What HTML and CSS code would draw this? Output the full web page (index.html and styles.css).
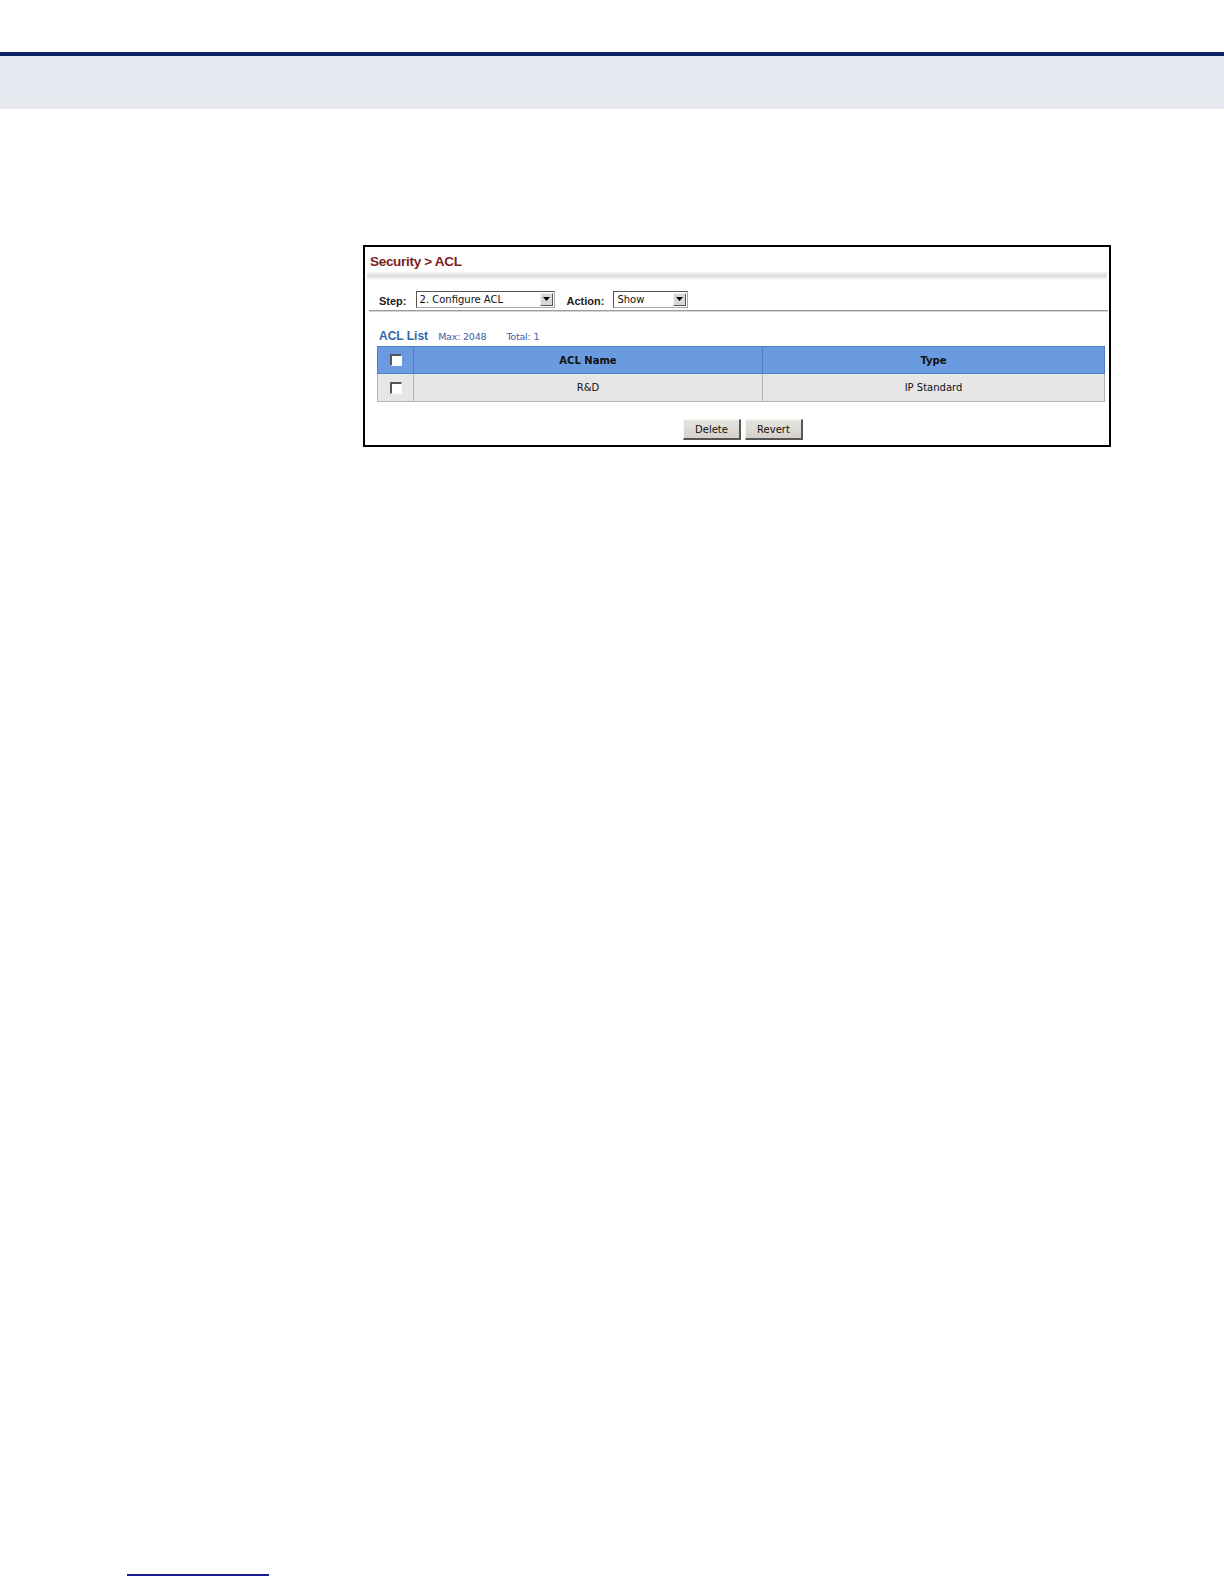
FILE: index.html
```html
<!DOCTYPE html>
<html>
<head>
<meta charset="utf-8">
<link rel="stylesheet" href="styles.css">
</head>
<body>
<div class="topbar"></div>
<div class="panel">
  <div class="title">Security &gt; ACL</div>
  <div class="title-band"></div>
  <div class="step-row">
    <span class="lbl">Step:</span>
    <div class="select sel-step"><span class="sel-text">2. Configure ACL</span><span class="arrow"><svg width="7" height="4" viewBox="0 0 7 4"><path d="M0 0H7L3.5 4Z" fill="#000"/></svg></span></div>
    <span class="lbl lbl-action">Action:</span>
    <div class="select sel-action"><span class="sel-text">Show</span><span class="arrow"><svg width="7" height="4" viewBox="0 0 7 4"><path d="M0 0H7L3.5 4Z" fill="#000"/></svg></span></div>
  </div>
  <div class="sep"></div>
  <div class="list-head">
    <span class="list-title">ACL List</span>
    <span class="list-meta">Max: 2048</span>
    <span class="list-meta total">Total: 1</span>
  </div>
  <table class="grid">
    <tr class="hdr">
      <td class="cb-cell"><span class="cb"></span></td>
      <td class="name-col">ACL Name</td>
      <td>Type</td>
    </tr>
    <tr class="row">
      <td class="cb-cell"><span class="cb"></span></td>
      <td class="name-col">R&amp;D</td>
      <td>IP Standard</td>
    </tr>
  </table>
  <div class="buttons">
    <span class="btn">Delete</span>
    <span class="btn">Revert</span>
  </div>
</div>
<div class="footline"></div>
</body>
</html>
```

FILE: styles.css
```css
html, body {
  margin: 0;
  padding: 0;
  background: #ffffff;
}
body {
  width: 1224px;
  height: 1584px;
  font-family: "DejaVu Sans", "Liberation Sans", sans-serif;
  position: relative;
}
.topbar {
  margin-top: 52px;
  height: 53px;
  border-top: 4px solid #0c2462;
  background: linear-gradient(#e4e8f0, #e6e9ee);
}
.panel {
  margin-top: 136px;
  margin-left: 363px;
  width: 744px;
  height: 198px;
  border: 2px solid #000;
  box-sizing: content-box;
}
.title {
  height: 25px;
  padding-left: 5px;
  padding-top: 7px;
  box-sizing: border-box;
  font-family: "Liberation Sans", Arial, sans-serif;
  font-weight: bold;
  font-size: 13.5px;
  color: #7a1e20;
  letter-spacing: -0.3px;
}
.title-band {
  height: 8px;
  margin: 0 2px;
  background: linear-gradient(#f4f4f4, #dcdcdc 45%, #efefef 80%, #fafafa);
}
.step-row {
  display: flex;
  align-items: center;
  height: 20px;
  margin-top: 9px;
  padding-left: 14px;
  font-family: "Liberation Sans", Arial, sans-serif;
}
.lbl {
  font-size: 11px;
  font-weight: bold;
  color: #222;
  margin-top: 3px;
}
.lbl-action {
  margin-left: 12px;
}
.select {
  display: flex;
  align-items: center;
  justify-content: space-between;
  height: 17px;
  box-sizing: border-box;
  border: 1px solid #555;
  border-right-color: #aaa;
  border-bottom-color: #aaa;
  background: #fff;
  margin-left: 9px;
  padding-left: 3px;
  padding-right: 1px;
}
.sel-step { width: 139px; }
.sel-action { width: 75px; margin-left: 9px; }
.sel-text {
  font-family: "DejaVu Sans", sans-serif;
  font-size: 10px;
  color: #111;
}
.arrow {
  width: 13px;
  height: 13px;
  box-sizing: border-box;
  background: #d8d8d8;
  border: 1px solid #f4f4f4;
  border-right-color: #555;
  border-bottom-color: #555;
  display: flex;
  align-items: center;
  justify-content: center;
}
.sep {
  margin: 1px 1px 0 4px;
  height: 1px;
  background: #9a9a9a;
  border-bottom: 1px solid #d4d4d4;
}
.list-head {
  margin-top: 17px;
  padding-left: 14px;
  display: flex;
  align-items: baseline;
  height: 14px;
  font-family: "Liberation Sans", Arial, sans-serif;
  color: #2f5aa6;
}
.list-title {
  font-size: 12px;
  font-weight: bold;
  color: #3466ac;
}
.list-meta {
  font-family: "DejaVu Sans", sans-serif;
  font-size: 9.5px;
  margin-left: 10px;
  color: #3a62a8;
  letter-spacing: -0.2px;
}
.list-meta.total { margin-left: 20px; }
.grid {
  margin-top: 3px;
  margin-left: 12px;
  width: 728px;
  border-collapse: collapse;
  font-family: "DejaVu Sans", sans-serif;
  font-size: 10px;
  text-align: center;
}
.grid td {
  padding: 0;
}
.hdr td {
  height: 26px;
  background: #6a9be0;
  border: 1px solid #4f80c4;
  color: #111;
  font-weight: bold;
}
.row td {
  height: 27px;
  background: #e6e6e6;
  border: 1px solid #b4b4b4;
  color: #111;
}
.cb-cell { width: 35px; }
.name-col { width: 348px; }
.cb {
  display: inline-block;
  width: 12px;
  height: 12px;
  box-sizing: border-box;
  background: #fff;
  border: 1px solid #f8f8f8;
  border-top: 2px solid #555;
  border-left: 2px solid #555;
  vertical-align: middle;
}
.buttons {
  display: flex;
  justify-content: center;
  gap: 4px;
  margin-top: 17px;
  padding-left: 12px;
}
.btn {
  width: 58px;
  height: 21px;
  box-sizing: border-box;
  background: linear-gradient(#e6e4df, #d4d1ca);
  border: 1px solid #f5f5f5;
  border-right: 2px solid #555;
  border-bottom: 2px solid #555;
  font-family: "DejaVu Sans", sans-serif;
  font-size: 10px;
  color: #111;
  display: flex;
  align-items: center;
  justify-content: center;
}
.footline {
  position: absolute;
  left: 127px;
  top: 1574px;
  width: 142px;
  height: 2px;
  background: #1b1b8c;
}
```
